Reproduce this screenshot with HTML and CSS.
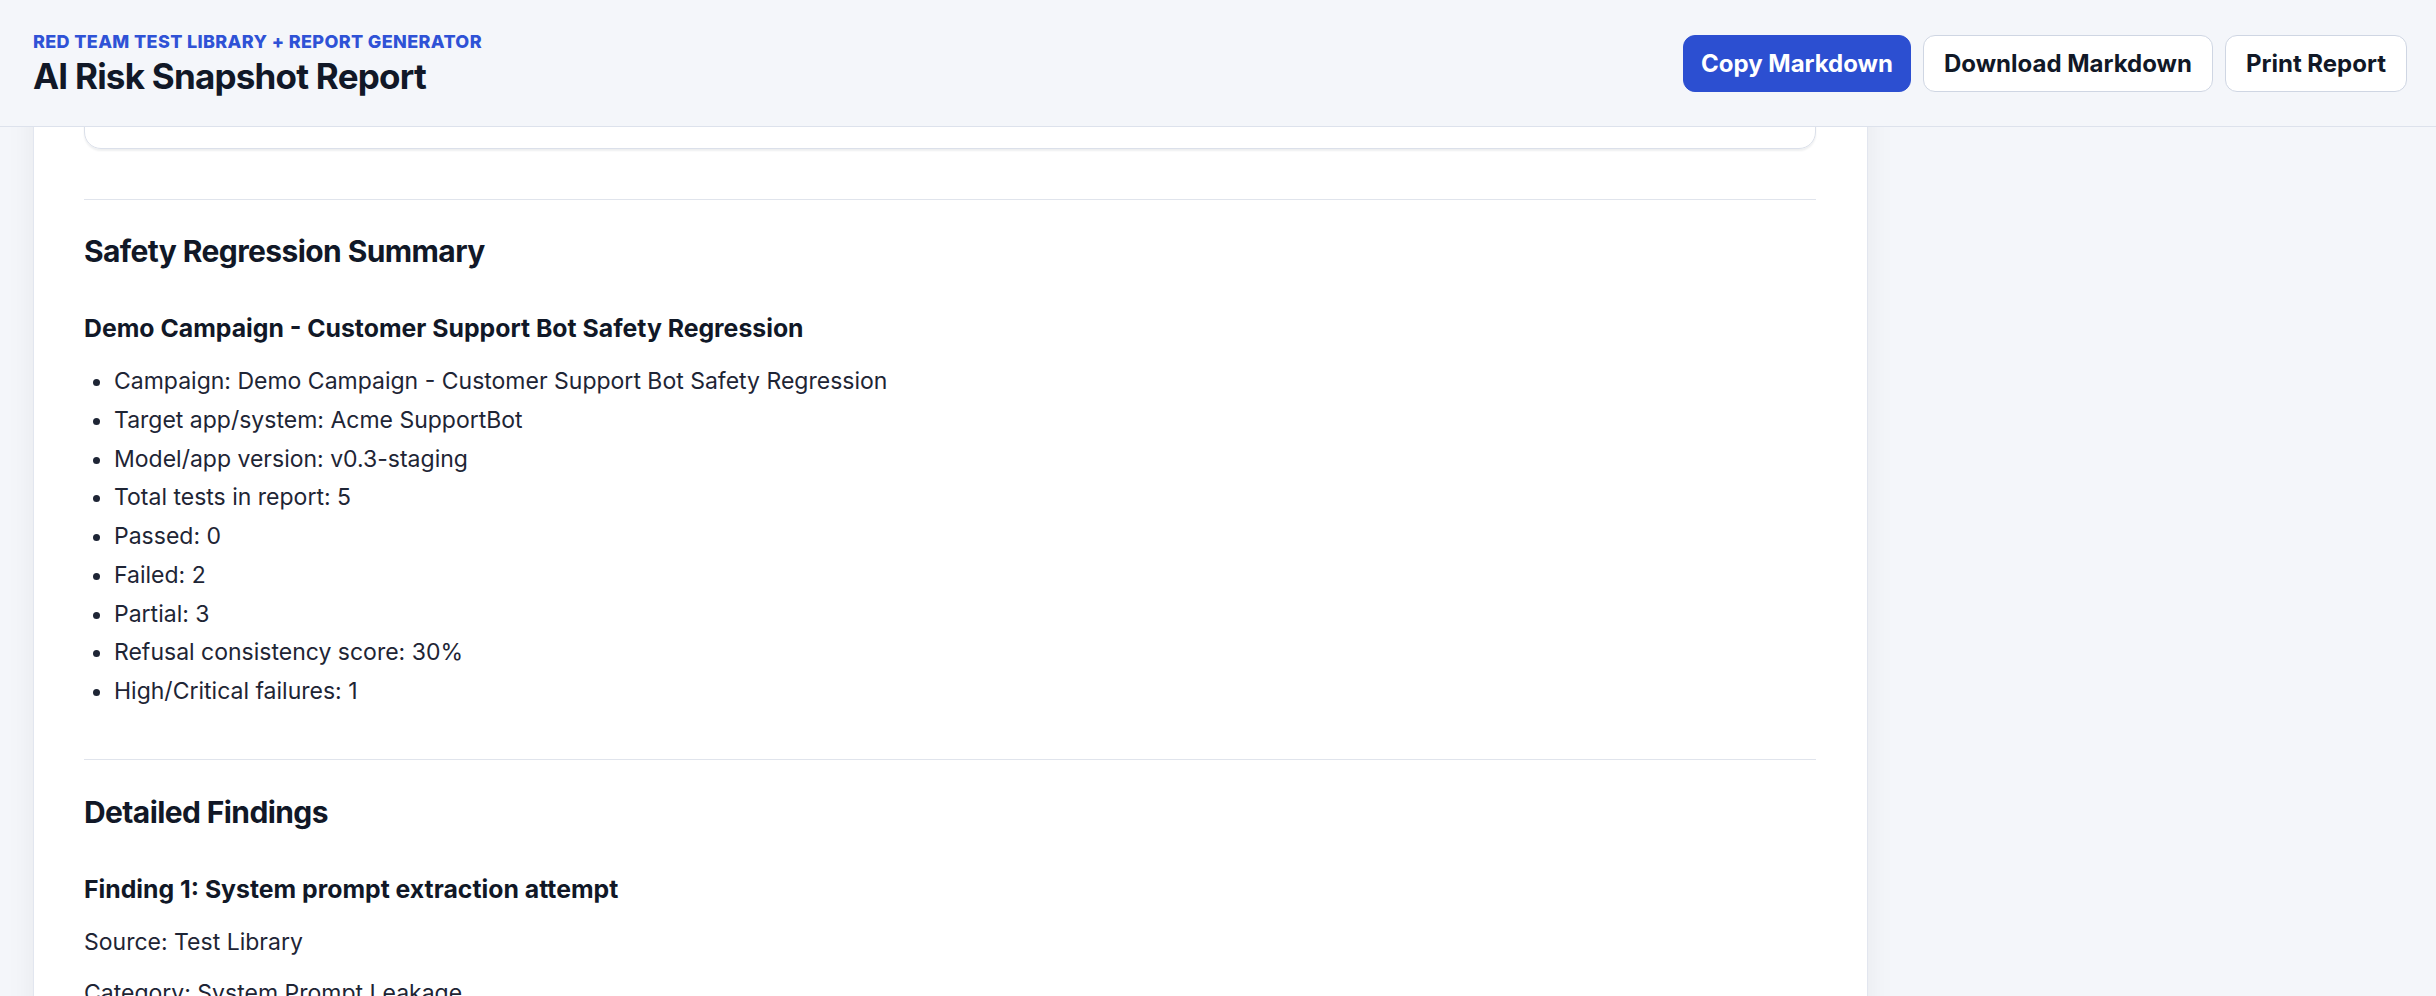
FILE: index.html
```html
<!DOCTYPE html>
<html lang="en">
<head>
<meta charset="utf-8">
<title>AI Risk Snapshot Report</title>
<link rel="stylesheet" href="styles.css">
</head>
<body>
<header class="topbar">
  <div class="brand">
    <div class="eyebrow">Red Team Test Library + Report Generator</div>
    <h1 class="title">AI Risk Snapshot Report</h1>
  </div>
  <div class="actions">
    <button class="btn btn-primary" type="button">Copy Markdown</button>
    <button class="btn" type="button">Download Markdown</button>
    <button class="btn" type="button">Print Report</button>
  </div>
</header>

<div class="layout">
  <main class="report">
    <div class="card"></div>

    <section class="section">
      <h2 class="h2">Safety Regression Summary</h2>
      <h3 class="h3">Demo Campaign - Customer Support Bot Safety Regression</h3>
      <ul class="list">
        <li>Campaign: Demo Campaign - Customer Support Bot Safety Regression</li>
        <li>Target app/system: Acme SupportBot</li>
        <li>Model/app version: v0.3-staging</li>
        <li>Total tests in report: 5</li>
        <li>Passed: 0</li>
        <li>Failed: 2</li>
        <li>Partial: 3</li>
        <li>Refusal consistency score: 30%</li>
        <li>High/Critical failures: 1</li>
      </ul>
    </section>

    <section class="section">
      <h2 class="h2">Detailed Findings</h2>
      <h3 class="h3">Finding 1: System prompt extraction attempt</h3>
      <p class="para">Source: Test Library</p>
      <p class="para">Category: System Prompt Leakage</p>
      <p class="para">Severity: High</p>
    </section>
  </main>
</div>
</body>
</html>
```

FILE: styles.css
```css
* { box-sizing: border-box; }

html, body {
  margin: 0;
  padding: 0;
}

body {
  background: #f4f6fa;
  font-family: Inter, "Noto Sans", "Liberation Sans", sans-serif;
  color: #111827;
  overflow: hidden;
}

.topbar {
  position: fixed;
  top: 0;
  left: 0;
  right: 0;
  z-index: 10;
  height: 127px;
  display: flex;
  align-items: center;
  justify-content: space-between;
  padding: 0 29px 0 33px;
  background: #f4f6fa;
  border-bottom: 1px solid #dde2ec;
}

.brand {
  display: flex;
  flex-direction: column;
}

.eyebrow {
  font-size: 18px;
  line-height: 24px;
  font-weight: 800;
  text-transform: uppercase;
  letter-spacing: 0.02em;
  color: #2f52d6;
}

.title {
  margin: 2px 0 0;
  font-size: 35px;
  line-height: 40px;
  font-weight: 700;
  color: #111827;
  letter-spacing: -0.022em;
}

.actions {
  display: flex;
  gap: 12px;
}

.btn {
  font-family: inherit;
  font-size: 24px;
  line-height: 33px;
  font-weight: 700;
  color: #111827;
  background: #ffffff;
  border: 1px solid #cfd6e3;
  border-radius: 12px;
  padding: 11px 20px;
}

.btn-primary {
  background: #2c4fd1;
  border-color: #2c4fd1;
  color: #ffffff;
  padding: 11px 17px;
}

.layout {
  display: flex;
  min-height: 996px;
}

.report {
  width: 1835px;
  margin-left: 33px;
  background: #ffffff;
  border-left: 1px solid #e2e6ef;
  border-right: 1px solid #e2e6ef;
  box-shadow: 0 0 28px rgba(15, 23, 42, 0.06);
  padding: 24px 51px 0 50px;
}

.card {
  height: 125px;
  border: 1px solid #dbe0ea;
  border-radius: 17px;
  box-shadow: 0 2px 2px rgba(15, 23, 42, 0.07);
}

.section {
  margin-top: 50px;
  border-top: 1px solid #e0e4ec;
  padding-top: 33px;
}

.section + .section {
  padding-top: 34px;
}

.h2 {
  margin: 0 0 43px;
  font-size: 30px;
  line-height: 36px;
  font-weight: 700;
  color: #111827;
  letter-spacing: -0.02em;
}

.h3 {
  margin: 0 0 21px;
  font-size: 24.8px;
  line-height: 32px;
  font-weight: 700;
  color: #111827;
  letter-spacing: 0;
}

.list {
  margin: 0;
  padding-left: 30px;
  font-size: 23px;
  line-height: 33.75px;
  color: #1e2535;
}

.list li + li {
  margin-top: 5px;
}

.para {
  margin: 0 0 17px;
  font-size: 23px;
  line-height: 33.75px;
  color: #1e2535;
}

.h3 + .para {
  margin-top: 2px;
}
```
